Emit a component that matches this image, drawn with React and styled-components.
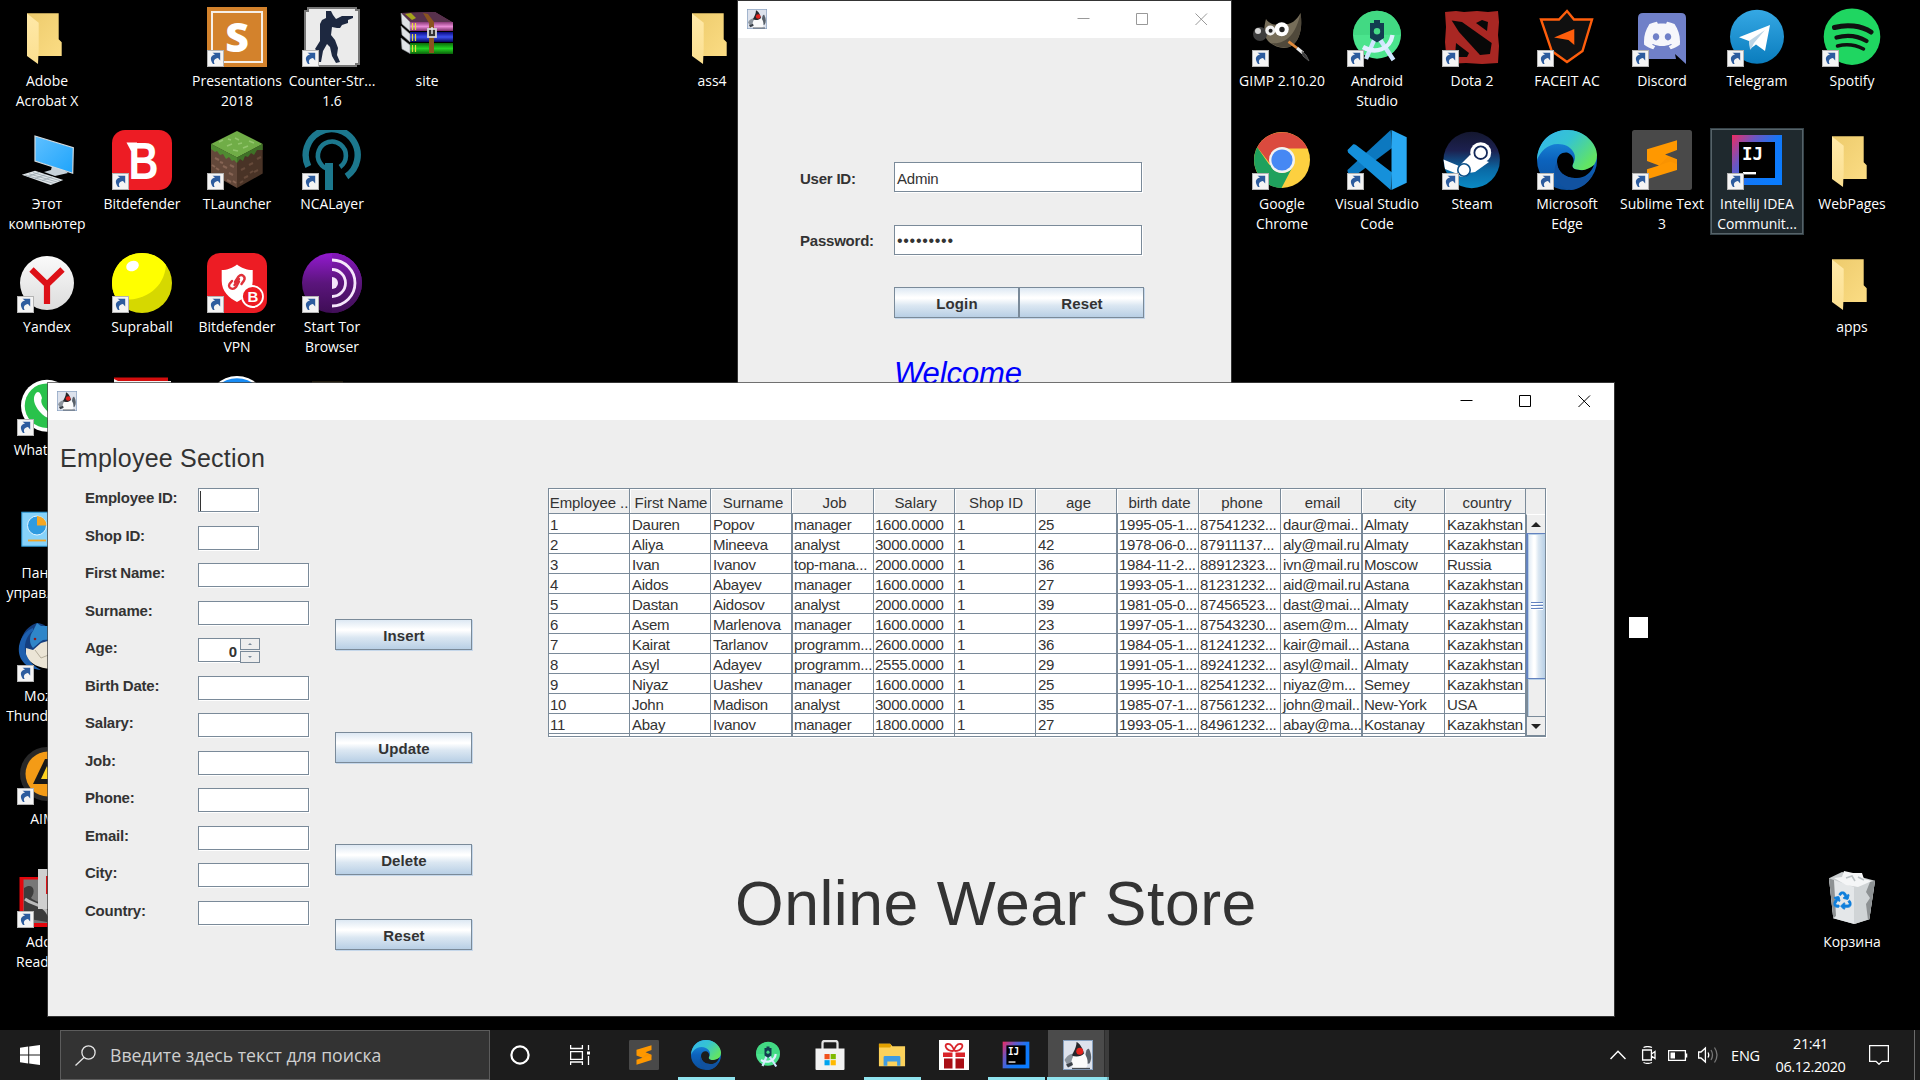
import React from 'react';
import styled, { createGlobalStyle, css } from 'styled-components';
import { SiDiscord } from 'react-icons/si';
import { FaRecycle } from 'react-icons/fa';

const GlobalStyle = createGlobalStyle`
  *, *::before, *::after { box-sizing: border-box; }
  html, body { margin: 0; background: #000; overflow: hidden; }
`;

const swing = '"Liberation Sans", Arial, sans-serif';
const segoe = '"Open Sans", "Noto Sans", sans-serif';

/* ---------- desktop ---------- */

const Desktop = styled.main`
  position: relative;
  width: 1920px;
  height: 1080px;
  overflow: hidden;
  background: #000;
  display: flex;
  flex-direction: column;
`;

const IconGrid = styled.div`
  flex: 1;
  min-height: 0;
  display: grid;
  grid-template-columns: repeat(20, 94px);
  grid-auto-rows: 123px;
  column-gap: 1px;
  padding-top: 5px;
`;

const Shortcut = styled.div`
  grid-column: ${(p) => p.$col + 1};
  grid-row: ${(p) => p.$row + 1};
  height: 107px;
  padding-top: 2px;
  display: flex;
  flex-direction: column;
  align-items: center;
  ${(p) =>
    p.$selected &&
    css`
      background: #1f292e;
      box-shadow: inset 0 0 0 1px #37444a, inset 0 0 0 2px #566369;
    `}
`;

const Caption = styled.div`
  margin-top: 3px;
  width: 120px;
  flex: none;
  text-align: center;
  font: 400 15px/20px ${segoe};
  color: #fff;
  white-space: nowrap;
  transform: scaleX(0.93);
`;

const Badge = () => (
  <g>
    <rect x="0.5" y="43.5" width="16" height="16" fill="#f4f4f4" stroke="#b4b4b4" />
    <path d="M6 57 C2.5 52 3.5 48.5 8 47.5 L5.5 45.8 H13.2 V53.5 L11 51 C7.5 51.8 6 53.5 7.6 57 Z" fill="#2d5c9e" />
  </g>
);

const Folder = () => (
  <g>
    <path d="M10 6.3 H41.7 V32.3 L44.7 35.3 V49 H10 Z" fill="url(#folderBack)" />
    <path d="M10 6.5 L21.7 15.7 V42 L21 57 L10 49 Z" fill="url(#folderFront)" />
  </g>
);

const Presentations = () => (
  <g>
    <rect width="60" height="60" fill="#d3822c" />
    <rect x="5" y="5" width="50" height="50" fill="none" stroke="#f6efe8" strokeWidth="2" />
    <text x="30" y="45" textAnchor="middle" fontFamily={segoe} fontWeight="800" fontSize="41" fill="#fff">S</text>
  </g>
);

const CounterStrike = () => (
  <g>
    <path d="M6 1 H54 V3 H57 V57 H54 V59 H4 V56 H3 V4 H6 Z" fill="#ebebeb" stroke="#767676" strokeWidth="2" />
    <path d="M24 4 L29 4 L31 8 L34 12 L40 9 L51 9 V11 L46 13 V16 L40 18 L38 21 L35 21 L30 20 L29 28 L33 33 L36 41 L35 48 L38 55 L34 56 L30 49 L28 40 L25 37 L21 44 L19 55 L16 55 L17 46 L13 42 L18 34 L18 17 L20 13 L24 11 Z" fill="#1d2840" />
  </g>
);

const Archive = () => (
  <g>
    <path d="M4 6 L38 5 L55 15 V22 H13 Z" fill="#7d3a66" />
    <path d="M4 6 L38 5 L55 15 H13 Z" fill="#57314c" />
    <path d="M8 7 L14 6 L19 11 L15 13 Z" fill="#a5a51c" />
    <rect x="13" y="15" width="43" height="9" fill="url(#bookPink)" />
    <rect x="13" y="25" width="43" height="10" fill="url(#bookBlue)" />
    <rect x="13" y="36" width="43" height="11" fill="url(#bookGreen)" />
    <path d="M4 6 L13 15 V24 L5 17 Z M4 19 L13 27 V35 L5 28 Z M4 31 L13 38 V46.5 L5 42 Z" fill="#dfe3e6" stroke="#8d9296" strokeWidth="0.6" />
    <path d="M15.5 16 V23 M18.5 16 V23 M15.5 27 V34 M18.5 27 V34 M15.5 38 V45 M18.5 38 V45" stroke="#e6dc3c" strokeWidth="1.2" />
    <path d="M26 6 L31 7 L37 15 V46 H32 V16 Z" fill="#8a541f" />
    <rect x="31" y="22" width="8" height="8" fill="#333" stroke="#d8d8d8" strokeWidth="1.8" />
    <path d="M35 20 V27" stroke="#eee" strokeWidth="1.4" />
  </g>
);

const Computer = () => (
  <g>
    <path d="M35 36 L34 40 L27 42 L38 46 L51 43 L46 39 Z" fill="#c7d2da" />
    <path d="M18 6 L56.3 17.7 L55.7 43.3 L18 31 Z" fill="url(#screen)" stroke="#d3dade" strokeWidth="1.2" />
    <path d="M4.7 44.7 L18 40.7 L46.3 50 L33.7 55 Z" fill="#dfe5e8" />
    <path d="M8 45 L37 53.5 M12 43.8 L40 52 M16 42.5 L43 50.7 M11 46.5 L22 42.5 M18 48.5 L29 44.5 M25 50.7 L36 46.5" stroke="#9aa7ae" strokeWidth="0.8" />
  </g>
);

const BitB = () => (
  <g>
    <rect width="60" height="60" rx="13" fill="#ed1c24" />
    <path d="M14.5 12.5 H25 V21 H19 Z" fill="#fff" />
    <text x="16.5" y="48.7" fontFamily={swing} fontWeight="700" fontSize="51" textLength="30" lengthAdjust="spacingAndGlyphs" fill="#fff">B</text>
  </g>
);

const Minecraft = () => (
  <g>
    <path d="M4 14 L30 27.5 V58 L4 43.5 Z" fill="#63483a" />
    <path d="M55.7 14 L30 27.5 V58 L55.7 43.5 Z" fill="#493326" />
    <path d="M30 1 L55.7 14 L30 27.5 L4 14 Z" fill="#70ad47" />
    <path d="M4 14 L30 27.5 V33 L27 30 L25 31 L22 27 L19 29 L16 24 L13 25 L10 21 L8 22 L4 19 Z" fill="#4f8a31" />
    <path d="M55.7 14 L30 27.5 V33 L33 29 L36 31 L38 26 L41 27 L44 23 L47 25 L50 20 L55.7 20 Z" fill="#3f7227" />
    <path d="M12 12 l4 -2 M20 16 l5 -2 M28 8 l4 2 M36 18 l5 -2 M42 11 l5 2 M26 20 l5 1 M31 14 l4 -1 M21 9 l3 1" stroke="#93c66d" strokeWidth="1.6" />
    <path d="M8 28 l4 2 M16 36 l4 2 M9 38 l3 2 M22 43 l4 2 M20 50 l4 2 M23 35 l4 2 M13 32 l3 1 M5 35 l3 2 M26 51 l3 2" stroke="#866454" strokeWidth="2" />
    <path d="M34 40 l4 -2 M42 35 l4 -2 M37 48 l4 -2 M47 42 l4 -2 M50 29 l4 -2 M33 53 l3 -2 M43 43 l3 -2" stroke="#664a3a" strokeWidth="2" />
  </g>
);

const NcaLayer = () => (
  <g fill="none" stroke="#1c788e">
    <path d="M6.3 36.5 A26 26 0 1 1 44.5 46.5" strokeWidth="6.4" />
    <path d="M28.5 39.5 A14 14 0 1 1 38 37" strokeWidth="4.6" />
    <path d="M27 33 V60" strokeWidth="8" />
  </g>
);

const Yandex = () => (
  <g>
    <circle cx="30" cy="30" r="27" fill="url(#silver)" />
    <path d="M14.5 16.5 L30 31.5 L45.5 16.5 M30 30 V51" fill="none" stroke="#dd1017" strokeWidth="6.2" />
  </g>
);

const Supraball = () => (
  <g>
    <circle cx="30" cy="30" r="30" fill="#d6d800" />
    <path d="M30 0 C13 0 0 13 0 30 C0 37 2 42 5 46 C28 50 52 38 54 12 C48 4 40 0 30 0 Z" fill="#ffff00" />
    <ellipse cx="20.5" cy="13" rx="6.5" ry="5" transform="rotate(-20 20.5 13)" fill="#fff" />
  </g>
);

const Vpn = () => (
  <g>
    <rect width="60" height="60" rx="13" fill="#ed1c24" />
    <path d="M30 11.5 C34 15 40 17 45.7 17 V28 C45.7 38 38 45 30 49 C22 45 14.7 38 14.7 28 V17 C20 17 26 15 30 11.5 Z" fill="#fff" />
    <g fill="none" stroke="#e0313a" strokeWidth="2.4" strokeLinecap="round">
      <path d="M28 29 L31.5 23.5 C35 20 39 24 37 27.5 L34.5 31" />
      <path d="M32 28.5 L29 34 C25.5 38 20.5 34.5 22.5 31 L25 28" />
      <path d="M27.5 32 L32 26" />
    </g>
    <circle cx="45.5" cy="43.5" r="10.5" fill="#ed1c24" stroke="#fff" strokeWidth="1.8" />
    <text x="45.8" y="49" textAnchor="middle" fontFamily={swing} fontWeight="700" fontSize="15" fill="#fff">B</text>
  </g>
);

const Tor = () => (
  <g>
    <circle cx="30" cy="30" r="30" fill="url(#torLeft)" />
    <path d="M30 0 A30 30 0 0 1 30 60 Z" fill="url(#torRight)" />
    <path d="M30 24 A6 6 0 0 1 30 36 Z" fill="#f5e6fb" />
    <g fill="none" stroke="#f5e6fb" strokeWidth="2.8">
      <path d="M30 16.5 A13.5 13.5 0 0 1 30 43.5" />
      <path d="M30 7 A23 23 0 0 1 30 53" />
    </g>
  </g>
);

const WhatsApp = () => (
  <g>
    <circle cx="30" cy="29.7" r="26" fill="#fff" />
    <circle cx="30" cy="29.7" r="22.3" fill="#29c24b" />
    <path d="M19 17 C22 14 24 18 25 22 C23 26 25 30 31 36 L38 40 C34 44 28 42 23 36 C17 29 15 22 19 17 Z" fill="#fff" />
  </g>
);

const RedDocument = () => (
  <g>
    <path d="M2 1.5 H56 V6 H2 Z" fill="#d40d0d" />
    <path d="M2 3 L6 5 H59 V8 H2 Z" fill="#f4f4f4" />
  </g>
);

const BlueDisc = () => (
  <g>
    <circle cx="30" cy="30" r="30" fill="#fff" />
    <circle cx="30" cy="30" r="27.8" fill="#168bf5" />
  </g>
);

const BrownStrip = () => <rect x="10" y="5.5" width="31" height="2" fill="#3a331c" />;

const ControlPanel = () => (
  <g>
    <rect x="4.8" y="13.2" width="52" height="34" fill="#86d2fa" stroke="#2b9ad8" />
    <circle cx="20" cy="26.5" r="9.5" fill="#2f9be0" stroke="#dff3ff" />
    <path d="M20 26.5 V17 A9.5 9.5 0 0 1 29.5 26.5 Z" fill="#f5a623" />
    <path d="M11 41.5 H29" stroke="#f5a623" strokeWidth="1.8" />
  </g>
);

const Thunderbird = () => (
  <g>
    <path d="M20 1 C26 1 34 6 36 16 L34 44 C20 44 8 38 4 30 C0 20 8 4 20 1 Z" fill="#143f80" />
    <path d="M9 26 L16 28 L24 21 L34 18 V47 C22 46 13 42 9 34 Z" fill="#ebe5d6" />
    <path d="M18 28 L24 36 L34 32" fill="none" stroke="#b5ae9c" />
    <path d="M20 1 L24 4 L32 4 L38 17 L26 18 C22 20 20 23 16 26 C12 22 12 14 16 9 Z" fill="#2f86c9" />
    <path d="M16 9 C9 14 6 24 9 32 C12 40 17 44 24 48 C12 47 0 40 2 24 C4 14 10 8 16 6 Z" fill="#1d5fae" />
    <circle cx="18" cy="17" r="1.3" fill="#8e1a1a" />
  </g>
);

const Aimp = () => (
  <g>
    <circle cx="30" cy="29" r="27" fill="#282828" />
    <circle cx="31" cy="29" r="22.5" fill="#f49b16" />
    <path d="M16 39 L28 14 H34 L46 39 Z" fill="#191919" />
    <path d="M24 34 L30 21 L36 34 Z" fill="#ffd21f" />
  </g>
);

const AdobeReader = () => (
  <g>
    <rect x="2.5" y="9" width="52" height="50" fill="#e4070d" />
    <rect x="6.5" y="11.5" width="44" height="43.5" fill="#777" />
    <path d="M7 20 C15 14 20 22 14 30 C22 37 30 32 32 42 L30 54 L7 50 Z" fill="#3c3c3c" />
    <path d="M8 31 C17 38 28 35 33 50" fill="none" stroke="#b9b9b9" strokeWidth="3" />
    <rect x="21" y="1" width="36" height="40" fill="#cfcfcf" />
    <path d="M29 8 H50 V26 H29 Z" fill="#dd1217" />
  </g>
);

const Gimp = () => (
  <g>
    <path d="M14 12 C18 18 24 18 30 18 C39 18 45 13 48.5 6 C51 22 47 33 41 38 C33 44 22 40 16 34 C11 29 12 19 14 12 Z" fill="#766d59" />
    <path d="M48.5 6 C51 22 47 33 41 38 C34 43 25 40 19 36 C33 38 44 28 48.5 6 Z" fill="#50493b" />
    <circle cx="8" cy="27" r="7" fill="#3d3d3d" />
    <circle cx="6" cy="24" r="3" fill="#d7d7d7" />
    <circle cx="18.3" cy="23.5" r="5" fill="#f0f0f0" />
    <circle cx="29.7" cy="22.3" r="7" fill="#fff" />
    <circle cx="18.6" cy="23.7" r="2" fill="#222" />
    <circle cx="30" cy="22.5" r="2.7" fill="#222" />
    <path d="M36.5 34.7 L45 41" stroke="#e18b3c" strokeWidth="2.8" />
    <path d="M45 41 L51 46" stroke="#ececec" strokeWidth="3" />
    <path d="M50 44.5 L54 48 L57 54 L51 49 Z" fill="#3a3a3a" stroke="#555" />
  </g>
);

const AndroidStudio = () => (
  <g>
    <circle cx="30" cy="27.7" r="24" fill="#4be48d" />
    <path d="M6 28 A24 24 0 0 1 54 27.7 Z" fill="#3fd47f" opacity=".7" />
    <path d="M28 31 L19 52 M32 31 L46.5 53" stroke="#cfe6ff" strokeWidth="4.4" />
    <path d="M16 40 C28 47 43 43 45.5 28" fill="none" stroke="#dff0ff" strokeWidth="4.4" />
    <path d="M27 13 H33 V16 H37 V31 L30 35.5 L23 31 V16 H27 Z" fill="#123c50" />
    <circle cx="30" cy="24.3" r="3.2" fill="#46da87" />
  </g>
);

const Dota = () => (
  <g>
    <path d="M3 5 L14 4 L22 5 L35 4 L46 5 L56 4 L57 15 L56 28 L57 39 L56 56 L40 57 L24 56 L4 57 L4 46 L3 35 L4 20 Z" fill="#a92723" />
    <path d="M9.7 13.5 L20 15 L49.7 36 L48 47 L38 48 L17 25 Z" fill="#080808" />
    <path d="M34 16 L40 13 L46 15 L45 24 Z" fill="#080808" />
    <path d="M14 36 L27 46 L25 50 H13 Z" fill="#080808" />
  </g>
);

const Faceit = () => (
  <g>
    <path d="M4 12.5 H22 L30 4 L37 12.5 H55 L45.5 44 L30 55 L14.7 44 Z" fill="#101010" stroke="#ff5e0c" strokeWidth="2.4" />
    <path d="M17 30.5 L37.3 22 V38 L31.5 33 Z" fill="#ff5e0c" />
  </g>
);

const Chrome = () => (
  <g>
    <circle cx="30" cy="30" r="28" fill="#fdd040" />
    <path d="M5.2 17.2 A28 28 0 0 1 55.5 18.5 H30 A12 12 0 0 0 19 35 Z" fill="#db4a3e" />
    <path d="M5.2 17.2 A28 28 0 0 0 29.5 58 L41 36 A12 12 0 0 1 18.5 34 L17.5 35 Z" fill="#1fa15d" />
    <circle cx="30" cy="30" r="13" fill="#f2f2f2" />
    <circle cx="30" cy="30" r="10.6" fill="#4688f4" />
  </g>
);

const VsCode = () => (
  <g>
    <path d="M0.5 40 L43.7 0 L45 18 L7 46.5 C5 47.5 0 43.5 0.5 40 Z" fill="#0c78bf" />
    <path d="M0.5 20 L6 14.5 C6.5 14 8 14 9 15 L45 42.5 L43.7 60 L1 22.5 Z" fill="#1590da" />
    <path d="M44.5 0 L59.7 7.3 V52.7 L44.5 60 Z" fill="#29a8f2" />
  </g>
);

const Steam = () => (
  <g>
    <circle cx="29.7" cy="30" r="28.2" fill="url(#steam)" />
    <path d="M1.5 29.5 L17 36 L28 25 L47 32 L33 42 L27 43 C24 48 18 48 15.5 44 L3 39 Z" fill="#fff" />
    <circle cx="38.7" cy="22.7" r="10.5" fill="#fff" />
    <circle cx="38.7" cy="22.7" r="6.3" fill="#fff" stroke="#14295a" strokeWidth="1.8" />
    <circle cx="22" cy="40" r="6.2" fill="none" stroke="#0d5189" strokeWidth="1.6" />
  </g>
);

const Edge = () => (
  <g>
    <circle cx="30" cy="30" r="30" fill="url(#edgeBase)" />
    <path d="M0 30 C1 10 15 0 30 0 C48 0 60 14 60 25 C60 36 52 41 43 40 C37 40 34 37 36 34 C42 25 34 14 21 14 C10 14 3 22 0 30 Z" fill="url(#edgeTop)" />
    <path d="M20 32 C20 25 25 22 30 22.5 C35 24 38 29 36 34 C34 37 37 40 43 40 C48 41 53 38 57 35 C54 43 47 49 38 48 C28 48 20 42 20 32 Z" fill="var(--edge-hole)" />
    <path d="M20 32 C14 42 20 57 34 60 C44 59 52 53 55.5 44 C49 48 43 49 38 48 C28 48 20 41 20 32 Z" fill="#1152a0" />
  </g>
);

const Discord = () => (
  <g>
    <path d="M11 6 H49 Q54 6 54 11 V57 L43 47 L44 52 H11 Q6 52 6 47 V11 Q6 6 11 6 Z" fill="#7080c8" />
    <SiDiscord x="12" y="10.5" size={36} color="#f6f6fb" />
  </g>
);

const Telegram = () => (
  <g>
    <circle cx="30" cy="29.7" r="27" fill="url(#telegram)" />
    <path d="M12 30.3 L43 18 L38 44 L29 37.5 L23 42 L22 34 Z" fill="#fff" />
    <path d="M22 34 L38 23 L27 36 L23.5 43 Z" fill="#bcd5e6" />
  </g>
);

const Spotify = () => (
  <g>
    <circle cx="30" cy="29.7" r="28.3" fill="#1fd661" />
    <g fill="none" stroke="#101010" strokeLinecap="round">
      <path d="M12.5 20.5 C25 17 39 18.5 49 25" strokeWidth="5" />
      <path d="M14.5 30.5 C25 27.5 36 29 44.5 34" strokeWidth="4.3" />
      <path d="M15.5 39 C25 36.5 34 38 41.5 42" strokeWidth="3.5" />
    </g>
  </g>
);

const Sublime = () => (
  <g>
    <rect width="60" height="60" rx="2.5" fill="#494949" />
    <path d="M15 19.3 L45 10.3 V20 L33 24.5 L45 29.3 V40 L15 49.3 V39.3 L27 35.5 L15 31 Z" fill="#ff9800" />
    <path d="M27 35.5 L38 31.5 L45 34 V30 L36 26.5 Z" fill="#f08a00" opacity=".35" />
  </g>
);

const IntelliJ = () => (
  <g>
    <rect x="5" y="5" width="50" height="50" fill="url(#ij)" />
    <rect x="12" y="12" width="36" height="36" fill="#000" />
    <text x="15" y="30" fontFamily='"DejaVu Sans Mono", monospace' fontWeight="700" fontSize="18" textLength="21" lengthAdjust="spacingAndGlyphs" fill="#fff">IJ</text>
    <rect x="16" y="42" width="13" height="2.4" fill="#fff" />
  </g>
);

const RecycleBin = () => (
  <g>
    <path d="M7 10.3 L20 4 L53 12.7 L47.3 51.3 L32.3 56 L11.3 50.3 Z" fill="#c9cdcf" />
    <path d="M7 10.3 L32 19 L32.3 56 L11.3 50.3 Z" fill="#e4e7e9" />
    <path d="M32 19 L53 12.7 L47.3 51.3 L32.3 56 Z" fill="#d0d4d6" />
    <path d="M12 10 L20 9 L22 3 L31 5 L40 5 L42 11 L50 13 L36 19 L24 17 Z" fill="#f5f6f7" />
    <path d="M7 10.3 L12 12 L14 48 L11.3 50.3 Z M53 12.7 L48 14 L44 24 L48 30 L44 36 L46 52 L47.3 51.3 Z" fill="#8d9193" />
    <path d="M24 10 L30 8 L33 13 M36 9 L42 12" stroke="#b9c0c3" strokeWidth="1.6" fill="none" />
    <FaRecycle x="11.5" y="23.5" size={18} color="#0f7fdc" stroke="#0f7fdc" strokeWidth="24" />
  </g>
);

const Duke = () => (
  <g>
    <rect width="60" height="60" fill="#dde2ec" />
    <rect x="1" y="1" width="58" height="58" fill="none" stroke="#86a0bf" strokeWidth="2" />
    <path d="M3 40 C8 31 14 28 22 27 L20 44 L8 49 Z" fill="#8d959e" />
    <path d="M45 30 C46 20 49 16 52 18 C57 28 58 38 53 47 L44 48 Z" fill="#59616a" />
    <path d="M21 32 C14 44 16 55 22 57 H45 C52 50 50 34 42 27 Z" fill="#fbfbfb" />
    <path d="M27 4 C33 6 39 15 42 27 C38 33 25 35 18 31 C21 23 27 16 27 4 Z" fill="#26262b" />
    <circle cx="33.5" cy="22.5" r="7" fill="#e2231e" />
    <path d="M6 49 L18 44 L20 50 L10 55 Z" fill="#3b4148" />
    <path d="M18 57 H54" stroke="#454b52" strokeWidth="2.6" />
  </g>
);

const Store = () => (
  <g>
    <path d="M15 18 V6 Q15 2 19 2 H41 Q45 2 45 6 V18" fill="none" stroke="#e3e3e3" strokeWidth="4.5" />
    <path d="M1 17 H59 V58 Q59 60 57 60 H3 Q1 60 1 58 Z" fill="#f2f2f2" />
    <rect x="19" y="28" width="10.3" height="10.3" fill="#f1511b" />
    <rect x="31.3" y="28" width="10.3" height="10.3" fill="#7fba00" />
    <rect x="19" y="40.3" width="10.3" height="10.3" fill="#00a4ef" />
    <rect x="31.3" y="40.3" width="10.3" height="10.3" fill="#ffb900" />
  </g>
);

const Explorer = () => (
  <g>
    <path d="M2 6 H26 L31 11 H58 V54 H2 Z" fill="#fbd15b" />
    <path d="M2 6 H26 L29 10 L26 14 H2 Z" fill="#e0a000" />
    <path d="M12 53 V35 Q12 32 15 32 H45 Q48 32 48 35 V53 H41 V44 H20 V53 Z" fill="#3e9be2" />
  </g>
);

const Gift = () => (
  <g>
    <rect width="60" height="60" fill="#fff" />
    <g fill="none" stroke="#d9242a" strokeWidth="3.6">
      <path d="M29 22 C14 22 9 9 17 8 C24 7 29 15 30 22 C31 15 36 7 43 8 C51 9 46 22 31 22" />
    </g>
    <path d="M8 25 H27 V34 H8 Z M33 25 H52 V34 H33 Z" fill="#d9242a" />
    <path d="M10 37 H27 V57 H10 Z M33 37 H50 V57 H33 Z" fill="#a90f16" />
  </g>
);

const Defs = styled.svg`
  position: absolute;
  width: 0;
  height: 0;
`;

const Gradient = ({ id, stops, x2 = 0, y2 = 1 }) => (
  <linearGradient id={id} x1="0" y1="0" x2={x2} y2={y2}>
    {stops.map((c, i) => (
      <stop key={i} offset={i / (stops.length - 1)} stopColor={c} />
    ))}
  </linearGradient>
);

const Gradients = () => (
  <Defs>
    <defs>
      <Gradient id="folderBack" stops={['#edcb6c', '#fbdc84']} x2={1} />
      <Gradient id="folderFront" stops={['#ffe9a8', '#fbdf90']} />
      <Gradient id="bookPink" stops={['#8a3a78', '#e98bd6', '#7a2c66']} />
      <Gradient id="bookBlue" stops={['#0a0a80', '#3c50f0', '#05055a']} />
      <Gradient id="bookGreen" stops={['#0b6a0b', '#22d422', '#0a5f0a']} />
      <Gradient id="screen" stops={['#5fc0ff', '#1ea4fb']} x2={1} />
      <Gradient id="silver" stops={['#fafafa', '#dcdcdc']} />
      <Gradient id="torLeft" stops={['#931ad0', '#5b157c', '#3e0d55']} />
      <Gradient id="torRight" stops={['#8617bd', '#5a157a', '#420f59']} />
      <Gradient id="steam" stops={['#14172f', '#1c2150', '#0a6aa6', '#0a8ac4']} />
      <Gradient id="edgeBase" stops={['#1f97e6', '#0c63bd', '#0d4f9c']} />
      <Gradient id="edgeTop" stops={['#35b4ee', '#35c4d2', '#62e463']} x2={1} y2={0.6} />
      <Gradient id="telegram" stops={['#35a8e4', '#0a7cbd']} />
      <Gradient id="ij" stops={['#ef2b62', '#6a57c4', '#1278f8', '#0a7cff']} x2={1} y2={0.7} />
    </defs>
  </Defs>
);

const Glyph = styled.svg`
  display: block;
  flex: none;
  width: ${(p) => p.$size || 60}px;
  height: ${(p) => p.$size || 60}px;
  --edge-hole: ${(p) => p.$hole || '#000'};
`;

const shortcuts = [
  [0, 0, Folder, ['Adobe', 'Acrobat X']],
  [2, 0, Presentations, ['Presentations', '2018'], 1],
  [3, 0, CounterStrike, ['Counter-Str...', '1.6'], 1],
  [4, 0, Archive, ['site']],
  [7, 0, Folder, ['ass4']],
  [0, 1, Computer, ['Этот', 'компьютер']],
  [1, 1, BitB, ['Bitdefender'], 1],
  [2, 1, Minecraft, ['TLauncher'], 1],
  [3, 1, NcaLayer, ['NCALayer'], 1],
  [0, 2, Yandex, ['Yandex'], 1],
  [1, 2, Supraball, ['Supraball'], 1],
  [2, 2, Vpn, ['Bitdefender', 'VPN'], 1],
  [3, 2, Tor, ['Start Tor', 'Browser'], 1],
  [0, 3, WhatsApp, ['WhatsApp'], 1],
  [1, 3, RedDocument, []],
  [2, 3, BlueDisc, []],
  [3, 3, BrownStrip, []],
  [0, 4, ControlPanel, ['Панель', 'управления']],
  [0, 5, Thunderbird, ['Mozilla', 'Thunderbird'], 1],
  [0, 6, Aimp, ['AIMP'], 1],
  [0, 7, AdobeReader, ['Adobe', 'Reader XI'], 1],
  [13, 0, Gimp, ['GIMP 2.10.20'], 1],
  [14, 0, AndroidStudio, ['Android', 'Studio'], 1],
  [15, 0, Dota, ['Dota 2'], 1],
  [16, 0, Faceit, ['FACEIT AC'], 1],
  [17, 0, Discord, ['Discord'], 1],
  [18, 0, Telegram, ['Telegram'], 1],
  [19, 0, Spotify, ['Spotify'], 1],
  [13, 1, Chrome, ['Google', 'Chrome'], 1],
  [14, 1, VsCode, ['Visual Studio', 'Code'], 1],
  [15, 1, Steam, ['Steam'], 1],
  [16, 1, Edge, ['Microsoft', 'Edge'], 1],
  [17, 1, Sublime, ['Sublime Text', '3'], 1],
  [18, 1, IntelliJ, ['IntelliJ IDEA', 'Communit...'], 1, 1],
  [19, 1, Folder, ['WebPages']],
  [19, 2, Folder, ['apps']],
  [19, 7, RecycleBin, ['Корзина']],
];

/* ---------- windows ---------- */

const Window = styled.section`
  position: absolute;
  left: ${(p) => p.$x}px;
  top: ${(p) => p.$y}px;
  width: ${(p) => p.$w}px;
  height: ${(p) => p.$h}px;
  background: #eee;
  box-shadow: 0 0 0 1px rgba(70, 70, 70, 0.75);
  color: #333;
  font: 400 15px/20px ${swing};
`;

const TitleBar = styled.header`
  height: 37px;
  background: #fff;
  display: flex;
  align-items: center;
  padding: 0 23px 1px 9px;
  color: ${(p) => (p.$active ? '#000' : '#999')};
`;

const Controls = styled.div`
  margin-left: auto;
  display: flex;
  gap: 46px;
`;

const ControlGlyph = styled.svg`
  width: 13px;
  height: 13px;
  display: block;
  fill: none;
  stroke: currentColor;
`;

const WindowBar = ({ active }) => (
  <TitleBar $active={active}>
    <Glyph $size={20} viewBox="0 0 60 60"><Duke /></Glyph>
    <Controls>
      <ControlGlyph><path d="M0.5 5.5 H12.5" /></ControlGlyph>
      <ControlGlyph><path d="M0.5 0.5 H11.5 V11.5 H0.5 Z" /></ControlGlyph>
      <ControlGlyph><path d="M0.5 0.5 L12 12 M12 0.5 L0.5 12" /></ControlGlyph>
    </Controls>
  </TitleBar>
);

const Label = styled.label`
  font-weight: 700;
  letter-spacing: -0.22px;
`;

const Field = styled.div`
  width: ${(p) => p.$w}px;
  height: ${(p) => p.$h || 24}px;
  background: #fff;
  border: 1px solid #7a8a99;
  box-shadow: 1px 1px 0 #fff;
  display: flex;
  align-items: center;
  padding: 3px 2px 0;
  letter-spacing: -0.2px;
`;

const Caret = styled.i`
  width: 1px;
  height: 20px;
  margin: -1px 0 0 -1px;
  background: #333;
`;

const Dots = styled.span`
  font-size: 16px;
  letter-spacing: 0.7px;
  padding-bottom: 2px;
`;

const Button = styled.button`
  width: ${(p) => p.$w}px;
  height: 31px;
  padding: 2px 0 0 1px;
  border: 1px solid #7a8a99;
  border-radius: 0;
  background: linear-gradient(#dde8f3 0%, #fff 32%, #fff 36%, #dbe7f2 60%, #b8cfe5 100%);
  box-shadow: 1px 1px 0 #c5d7ea;
  font: 700 15px/20px ${swing};
  letter-spacing: 0.1px;
  color: #333;
`;

const LoginForm = styled.div`
  display: grid;
  grid-template-columns: 94px 250px;
  grid-template-rows: 63px 62px 69px 35px;
  padding: 124px 0 0 62px;
  overflow: hidden;
  height: 345px;
`;

const LoginLabel = styled(Label)`
  padding-top: ${(p) => p.$drop}px;
`;

const LoginButtons = styled.div`
  grid-column: 2;
  display: flex;
`;

const Welcome = styled.div`
  grid-column: 2;
  font-size: 31px;
  line-height: 35px;
  font-style: italic;
  letter-spacing: -0.1px;
  color: #0000ff;
`;

const Body = styled.div`
  display: flex;
  align-items: flex-start;
`;

const FormPane = styled.div`
  width: 287px;
`;

const Heading = styled.h1`
  margin: 0;
  height: 68px;
  padding: 23px 0 0 12px;
  font-size: 25px;
  line-height: 30px;
  font-weight: 400;
  letter-spacing: 0.22px;
`;

const FormRow = styled.div`
  height: 37.5px;
  padding-left: 37px;
  display: grid;
  grid-template-columns: 113px auto;
  justify-content: start;
  align-items: start;
`;

const Spinner = styled.div`
  display: grid;
  grid-template-columns: 42px 20px;
`;

const SpinnerValue = styled.div`
  height: 24px;
  border: 1px solid #7a8a99;
  border-right: 0;
  box-shadow: 0 1px 0 #fff;
  background: #fff;
  font-weight: 700;
  text-align: right;
  padding: 3px 3px 0 0;
`;

const SpinnerKeys = styled.div`
  display: grid;
  grid-template-rows: 12px 12px;
  gap: 1px;
`;

const SpinnerKey = styled.div`
  border: 1px solid #7a8a99;
  display: grid;
  place-items: center;

  &::after {
    content: '';
    border: 2.5px solid transparent;
    border-${(p) => (p.$down ? 'top' : 'bottom')}: 2px solid #7a8a99;
    border-${(p) => (p.$down ? 'bottom' : 'top')}: 0;
  }
`;

const ActionColumn = styled.div`
  width: 137px;
  padding-top: 199px;
  display: grid;
  grid-template-rows: 113px 112px 75px 32px;
  align-items: start;
`;

const DataPane = styled.div`
  margin-left: 76px;
  padding-top: 68px;
`;

const columns = '81px 81px 81px 82px 81px 81px 81px 82px 82px 81px 83px 81px';

const TableFrame = styled.div`
  width: 998px;
  height: 249px;
  border: 1px solid #7a8a99;
  box-shadow: 1px 1px 0 #fff;
  display: grid;
  grid-template-columns: 977px 19px;
  letter-spacing: -0.25px;
`;

const Grid = styled.div`
  background: #fff;
  overflow: hidden;
  height: 247px;
`;

const HeadRow = styled.div`
  display: grid;
  grid-template-columns: ${columns};
  height: 25px;
`;

const HeadCell = styled.div`
  height: 25px;
  background: #eee;
  border-right: 1px solid #7a8a99;
  border-bottom: 1px solid #7a8a99;
  box-shadow: inset 1px 1px 0 #fff;
  text-align: center;
  white-space: nowrap;
  line-height: 20px;
  padding: 4px 0 0 ${(p) => p.$pad}px;
  letter-spacing: -0.05px;
`;

const Row = styled.div`
  display: grid;
  grid-template-columns: ${columns};
  height: 20px;
`;

const Cell = styled.div`
  border-right: 1px solid #7a8a99;
  border-bottom: 1px solid #7a8a99;
  border-left: ${(p) => (p.$thick ? '1px solid #7a8a99' : '0')};
  padding-left: ${(p) => p.$pad}px;
  line-height: 21px;
  white-space: nowrap;
  overflow: hidden;
`;

const ScrollColumn = styled.div`
  display: grid;
  grid-template-rows: 25px 19px 146px 37px 20px;
`;

const ScrollKey = styled.div`
  border-left: 1px solid #7a8a99;
  border-top: 1px solid ${(p) => (p.$down ? '#7a8a99' : '#fff')};
  border-bottom: ${(p) => (p.$down ? '1px solid #7a8a99' : '0')};
  display: grid;
  place-items: center;

  &::after {
    content: '';
    border: 5px solid transparent;
    border-${(p) => (p.$down ? 'top' : 'bottom')}-color: #222;
    border-${(p) => (p.$down ? 'bottom' : 'top')}-width: 0;
  }
`;

const Thumb = styled.div`
  border: 1px solid #6382bf;
  border-left-width: 2px;
  border-right: 0;
  box-shadow: inset 1px 1px 0 #b8cfe5;
  background: linear-gradient(90deg, #dde8f3, #fff 32%, #fff 42%, #dbe7f2 62%, #b8cfe5);
  display: flex;
  flex-direction: column;
  align-items: center;
  justify-content: center;
  gap: 1px;
`;

const Grip = styled.i`
  width: 12px;
  height: 2px;
  background: #fff;
  border-top: 1px solid #6382bf;
`;

const Track = styled.div`
  border-left: 2px solid #7a8a99;
  box-shadow: inset 1px 1px 0 #b8cfe5;
`;

const StoreTitle = styled.div`
  margin: 131px 0 0 187px;
  font-size: 62.5px;
  line-height: 70px;
  letter-spacing: 0.52px;
  white-space: nowrap;
`;

const WhiteSquare = styled.div`
  position: absolute;
  left: 1629px;
  top: 617px;
  width: 19px;
  height: 21px;
  background: #fff;
`;

const headers = ['Employee ..', 'First Name', 'Surname', 'Job', 'Salary', 'Shop ID', 'age', 'birth date', 'phone', 'email', 'city', 'country'];

const headerPads = [0, 2, 4, 4, 3, 2, 5, 4, 5, 3, 4, 4];

const cellPads = [1, 2, 2, 1, 1, 2, 2, 1, 1, 2, 1, 2];

const employees = [
  ['1', 'Dauren', 'Popov', 'manager', '1600.0000', '1', '25', '1995-05-1...', '87541232...', 'daur@mai..', 'Almaty', 'Kazakhstan'],
  ['2', 'Aliya', 'Mineeva', 'analyst', '3000.0000', '1', '42', '1978-06-0...', '87911137...', 'aly@mail.ru', 'Almaty', 'Kazakhstan'],
  ['3', 'Ivan', 'Ivanov', 'top-mana...', '2000.0000', '1', '36', '1984-11-2...', '88912323...', 'ivn@mail.ru', 'Moscow', 'Russia'],
  ['4', 'Aidos', 'Abayev', 'manager', '1600.0000', '1', '27', '1993-05-1...', '81231232...', 'aid@mail.ru', 'Astana', 'Kazakhstan'],
  ['5', 'Dastan', 'Aidosov', 'analyst', '2000.0000', '1', '39', '1981-05-0...', '87456523...', 'dast@mai...', 'Almaty', 'Kazakhstan'],
  ['6', 'Asem', 'Marlenova', 'manager', '1600.0000', '1', '23', '1997-05-1...', '87543230...', 'asem@m...', 'Almaty', 'Kazakhstan'],
  ['7', 'Kairat', 'Tarlanov', 'programm...', '2600.0000', '1', '36', '1984-05-1...', '81241232...', 'kair@mail...', 'Astana', 'Kazakhstan'],
  ['8', 'Asyl', 'Adayev', 'programm...', '2555.0000', '1', '29', '1991-05-1...', '89241232...', 'asyl@mail..', 'Almaty', 'Kazakhstan'],
  ['9', 'Niyaz', 'Uashev', 'manager', '1600.0000', '1', '25', '1995-10-1...', '82541232...', 'niyaz@m...', 'Semey', 'Kazakhstan'],
  ['10', 'John', 'Madison', 'analyst', '3000.0000', '1', '35', '1985-07-1...', '87561232...', 'john@mail..', 'New-York', 'USA'],
  ['11', 'Abay', 'Ivanov', 'manager', '1800.0000', '1', '27', '1993-05-1...', '84961232...', 'abay@ma...', 'Kostanay', 'Kazakhstan'],
  Array(12).fill(''),
];

const thickColumns = [3, 7, 10];

const fields = [
  ['Employee ID:', 61],
  ['Shop ID:', 61],
  ['First Name:', 111],
  ['Surname:', 111],
  ['Age:', 0],
  ['Birth Date:', 111],
  ['Salary:', 111],
  ['Job:', 111],
  ['Phone:', 111],
  ['Email:', 111],
  ['City:', 111],
  ['Country:', 111],
];

/* ---------- taskbar ---------- */

const Taskbar = styled.footer`
  height: 50px;
  flex: none;
  background: #1c1c1c;
  display: flex;
  color: #fff;
  font-family: ${segoe};
`;

const Slot = styled.div`
  width: ${(p) => p.$w}px;
  display: flex;
  align-items: center;
  justify-content: center;
`;

const SearchBox = styled.div`
  width: 430px;
  background: #333;
  border: 1px solid #5c5c5c;
  display: flex;
  align-items: center;
  padding-left: 14px;
  gap: 14px;
  font-size: 18.5px;
  line-height: 24px;
  color: #cfcfcf;
`;

const SearchText = styled.span`
  white-space: nowrap;
  transform: scaleX(0.955);
  transform-origin: left;
`;

const Apps = styled.nav`
  margin-left: 3px;
  display: flex;
`;

const AppButton = styled.div`
  width: 62px;
  display: flex;
  align-items: center;
  justify-content: center;
  background: ${(p) => (p.$active ? 'linear-gradient(90deg, transparent 1px, #4b4b4b 1px 57px, #2d2d2d 57px 58px, #3c3c3c 58px)' : 'none')};
  border-bottom: 3px solid transparent;
  padding-top: 3px;
  ${(p) =>
    p.$open &&
    css`
      border-image: linear-gradient(90deg, transparent ${p.$active ? 1 : 6}px, #8fe3ee ${p.$active ? 1 : 6}px 57px, ${p.$active ? '#68a9b1' : 'transparent'} 57px) 3;
    `}
`;

const LineIcon = styled.svg`
  display: block;
  width: ${(p) => p.$w}px;
  height: ${(p) => p.$h}px;
  fill: none;
  stroke: ${(p) => p.$color || '#fff'};
  stroke-width: 1.3;
`;

const Tray = styled.div`
  margin-left: auto;
  display: flex;
  font-size: 14.5px;
`;

const Language = styled(Slot)`
  padding-top: 1px;
  letter-spacing: -0.2px;
`;

const Clock = styled.div`
  width: 93px;
  padding-top: 2px;
  text-align: center;
  line-height: 23px;
  letter-spacing: -0.4px;
`;

const ShowDesktop = styled.div`
  margin-left: 13px;
  width: 6px;
  border-left: 1px solid #6c6c6c;
`;

const pinned = [
  [Sublime, 30],
  [Edge, 30, 1],
  [AndroidStudio, 30],
  [Store, 30],
  [Explorer, 28, 1],
  [Gift, 30],
  [IntelliJ, 32, 1],
  [Duke, 30, 1, 1],
];

export default function App() {
  return (
    <>
      <GlobalStyle />
      <Desktop>
        <Gradients />
        <IconGrid>
          {shortcuts.map(([col, row, Icon, lines, linked, selected]) => (
            <Shortcut key={`${col}-${row}`} $col={col} $row={row} $selected={selected}>
              <Glyph viewBox="0 0 60 60">
                <Icon />
                {linked ? <Badge /> : null}
              </Glyph>
              <Caption>
                {lines.map((line) => (
                  <div key={line}>{line}</div>
                ))}
              </Caption>
            </Shortcut>
          ))}
        </IconGrid>

        <Window $x={738} $y={1} $w={493} $h={382}>
          <WindowBar />
          <LoginForm>
            <LoginLabel $drop={7}>User ID:</LoginLabel>
            <Field $w={248} $h={30}>Admin</Field>
            <LoginLabel $drop={6}>Password:</LoginLabel>
            <Field $w={248} $h={30}><Dots>•••••••••</Dots></Field>
            <LoginButtons>
              <Button $w={125}>Login</Button>
              <Button $w={125}>Reset</Button>
            </LoginButtons>
            <Welcome>Welcome</Welcome>
          </LoginForm>
        </Window>

        <Window $x={48} $y={383} $w={1566} $h={633}>
          <WindowBar active />
          <Body>
            <FormPane>
              <Heading>Employee Section</Heading>
              {fields.map(([name, width], i) => (
                <FormRow key={name}>
                  <Label>{name}</Label>
                  {width ? (
                    <Field $w={width}>{i === 0 && <Caret />}</Field>
                  ) : (
                    <Spinner>
                      <SpinnerValue>0</SpinnerValue>
                      <SpinnerKeys>
                        <SpinnerKey />
                        <SpinnerKey $down />
                      </SpinnerKeys>
                    </Spinner>
                  )}
                </FormRow>
              ))}
            </FormPane>
            <ActionColumn>
              {['Insert', 'Update', 'Delete', 'Reset'].map((name) => (
                <Button key={name} $w={137}>{name}</Button>
              ))}
            </ActionColumn>
            <DataPane>
              <TableFrame>
                <Grid>
                  <HeadRow>
                    {headers.map((name, i) => (
                      <HeadCell key={name} $pad={headerPads[i]}>{name}</HeadCell>
                    ))}
                  </HeadRow>
                  {employees.map((employee, r) => (
                    <Row key={r}>
                      {employee.map((value, i) => (
                        <Cell key={i} $thick={thickColumns.includes(i)} $pad={cellPads[i]}>{value}</Cell>
                      ))}
                    </Row>
                  ))}
                </Grid>
                <ScrollColumn>
                  <div />
                  <ScrollKey />
                  <Thumb>
                    <Grip />
                    <Grip />
                    <Grip />
                  </Thumb>
                  <Track />
                  <ScrollKey $down />
                </ScrollColumn>
              </TableFrame>
              <StoreTitle>Online Wear Store</StoreTitle>
            </DataPane>
          </Body>
        </Window>

        <WhiteSquare />

        <Taskbar>
          <Slot $w={60}>
            <Glyph $size={20} viewBox="0 0 20 20">
              <path d="M0 2.8 L8.2 1.6 V9.5 H0 Z M9.2 1.4 L20 0 V9.5 H9.2 Z M0 10.5 H8.2 V18.4 L0 17.2 Z M9.2 10.5 H20 V20 L9.2 18.6 Z" fill="#fff" />
            </Glyph>
          </Slot>
          <SearchBox>
            <LineIcon $w={21} $h={21} $color="#e6e6e6">
              <circle cx="13.5" cy="7.5" r="6.6" />
              <path d="M9 12.5 L0.5 20.5" />
            </LineIcon>
            <SearchText>Введите здесь текст для поиска</SearchText>
          </SearchBox>
          <Slot $w={60}>
            <LineIcon $w={20} $h={20}>
              <circle cx="10" cy="10" r="8.6" strokeWidth="2.2" />
            </LineIcon>
          </Slot>
          <Slot $w={60}>
            <LineIcon $w={20} $h={20}>
              <path d="M0.6 0 V3.5 H12.4 V0 M0.6 6.6 H12.4 V14.4 H0.6 Z M0.6 20 V17 H12.4 V20 M18.5 0 V5 M18.5 11 V20" />
              <rect x="17" y="6.5" width="3" height="3" fill="#fff" stroke="none" />
            </LineIcon>
          </Slot>
          <Apps>
            {pinned.map(([Icon, size, open, active], i) => (
              <AppButton key={i} $open={open} $active={active}>
                <Glyph $size={size} $hole="#1c1c1c" viewBox="0 0 60 60"><Icon /></Glyph>
              </AppButton>
            ))}
          </Apps>
          <Tray>
            <Slot $w={24}>
              <LineIcon $w={16} $h={10}><path d="M0.5 9 L8 1.3 L15.5 9" strokeWidth="1.5" /></LineIcon>
            </Slot>
            <Slot $w={37}>
              <LineIcon $w={16} $h={18}>
                <path d="M1.6 4 H10.4 V14 H1.6 Z M10.5 8 L14 5.5 V12.5 L10.5 10 M2.5 1.5 Q6.5 -0.3 11 1.5 M2.5 16.5 Q6.5 18.3 11 16.5" />
              </LineIcon>
            </Slot>
            <Slot $w={22}>
              <LineIcon $w={20} $h={11}>
                <path d="M0.6 0.6 H17.4 V10.4 H0.6 Z M18.6 3.5 V7.5" />
                <rect x="2.5" y="2.5" width="4.5" height="6" fill="#fff" stroke="none" />
              </LineIcon>
            </Slot>
            <Slot $w={38}>
              <LineIcon $w={21} $h={18}>
                <path d="M0.6 6 H3 L7.4 2 V16 L3 12 H0.6 Z M10 6.5 Q11.5 9 10 11.5" />
                <path d="M13 4 Q16 9 13 14 M16.5 1.5 Q21.5 9 16.5 16.5" stroke="#777" />
              </LineIcon>
            </Slot>
            <Language $w={37}>ENG</Language>
            <Clock>
              <div>21:41</div>
              <div>06.12.2020</div>
            </Clock>
            <Slot $w={44}>
              <LineIcon $w={20} $h={20}>
                <path d="M0.6 0.6 H19.4 V16.4 H13 L10 19.3 L7 16.4 H0.6 Z" />
              </LineIcon>
            </Slot>
            <ShowDesktop />
          </Tray>
        </Taskbar>
      </Desktop>
    </>
  );
}
